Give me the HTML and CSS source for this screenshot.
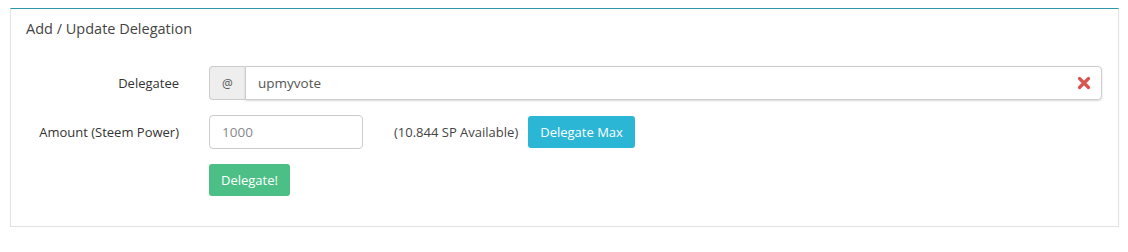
FILE: index.html
```html
<!DOCTYPE html>
<html>
<head>
<meta charset="utf-8">
<link rel="stylesheet" href="styles.css">
</head>
<body>
<div class="panel">
  <div class="panel-title">Add / Update Delegation</div>
  <div class="form">
    <div class="row">
      <div class="label">Delegatee</div>
      <div class="field grow">
        <div class="group">
          <span class="addon">@</span>
          <div class="input wide">
            <span class="val">upmyvote</span>
            <svg class="clear" width="14" height="14" viewBox="0 0 14 14"><path d="M2.5 2.5 L11.5 11.5 M11.5 2.5 L2.5 11.5" stroke="#d9534f" stroke-width="3.2" stroke-linecap="round"/></svg>
          </div>
        </div>
      </div>
    </div>
    <div class="row">
      <div class="label">Amount (Steem Power)</div>
      <div class="field">
        <div class="input amount"><span class="val light">1000</span></div>
        <span class="avail">(10.844 SP Available)</span>
        <span class="btn btn-info">Delegate Max</span>
      </div>
    </div>
    <div class="row">
      <div class="label"></div>
      <div class="field">
        <span class="btn btn-success">Delegate!</span>
      </div>
    </div>
  </div>
</div>
</body>
</html>
```
FILE: styles.css
```css
* { box-sizing: border-box; }
body {
  margin: 0;
  padding: 8px 10px 0 10px;
  background: #fff;
  font-family: "Open Sans", "Liberation Sans", sans-serif;
  font-size: 13px;
  color: #333;
}
.panel {
  width: 1109px;
  height: 219px;
  border: 1px solid #e3e3e3;
  border-top: 1px solid #2a9aa8;
  box-shadow: 0 1px 1px rgba(0,0,0,0.05);
  padding: 0 15px;
}
.panel-title {
  font-size: 14.5px;
  color: #444;
  padding-top: 10px;
  height: 57px;
}
.form { display: flex; flex-direction: column; }
.row { display: flex; align-items: center; }
.row + .row { margin-top: 15px; }
.label {
  width: 153px;
  text-align: right;
  color: #333;
  flex: none;
}
.field {
  margin-left: 30px;
  display: flex;
  align-items: center;
}
.field.grow { flex: 1; }
.group { display: flex; width: 893px; height: 34px; }
.addon {
  width: 36px;
  background: #eee;
  border: 1px solid #ccc;
  border-right: none;
  border-radius: 4px 0 0 4px;
  display: flex;
  align-items: center;
  justify-content: center;
  font-size: 12px;
  color: #555;
}
.input {
  height: 34px;
  border: 1px solid #ccc;
  border-radius: 4px;
  display: flex;
  align-items: center;
  padding: 0 12px;
  color: #555;
  font-size: 13.5px;
}
.input.wide {
  flex: 1;
  border-radius: 0 4px 4px 0;
  justify-content: space-between;
  padding-right: 10px;
  box-shadow: 0 1px 2px rgba(0,0,0,0.15);
}
.input.amount { width: 154px; }
.val.light { color: #888; }
.clear { display: block; }
.avail { margin-left: 31px; color: #444; white-space: nowrap; }
.btn {
  display: inline-flex;
  align-items: center;
  justify-content: center;
  height: 32px;
  padding: 0 12px;
  border-radius: 3px;
  color: #fff;
  font-size: 13px;
  white-space: nowrap;
}
.btn-info { background: #2bb6d6; margin-left: 10px; }
.btn-success { background: #4cbf86; }
```
